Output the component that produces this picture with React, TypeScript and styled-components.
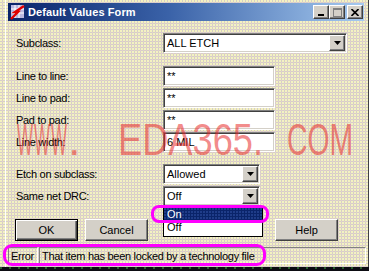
import React from "react";
import styled, { createGlobalStyle, css } from "styled-components";

const GlobalStyle = createGlobalStyle`
  html, body { margin: 0; padding: 0; }
  body {
    width: 369px;
    height: 271px;
    overflow: hidden;
    background: #0c0c12;
    font-family: "Liberation Sans", Arial, sans-serif;
  }
`;

const dotted = css`
  background-color: #d4d0c8;
  background-image:
    radial-gradient(circle at 1px 1px, #f6f2c2 0.7px, transparent 0.95px),
    radial-gradient(circle at 2.5px 2.5px, #e8cccc 0.5px, transparent 0.85px);
  background-size: 3px 3px, 3px 3px;
`;

const raised = css`
  box-sizing: border-box;
  background: #d4d0c8;
  border: 1px solid;
  border-color: #fff #404040 #404040 #fff;
  box-shadow: inset -1px -1px 0 #808080;
`;

const sunken = css`
  box-sizing: border-box;
  background: #fff;
  border: 1px solid;
  border-color: #808080 #fff #fff #808080;
  box-shadow: inset 1px 1px 0 #404040, inset -1px -1px 0 #d4d0c8;
`;

const Frame = styled.div`
  ${dotted};
  position: relative;
  height: 267px;
`;

const Window = styled.div`
  box-sizing: border-box;
  width: 364px;
  height: 267px;
  margin-left: 5px;
  padding: 3px 4px 0 1px;
  border-left: 1px solid #fff;
  border-right: 1px solid #404040;
  display: flex;
  flex-direction: column;
`;

const TitleBar = styled.div`
  height: 18px;
  margin-left: 1px;
  padding: 0 1px 0 2px;
  display: flex;
  align-items: center;
  background: linear-gradient(90deg, #0a246a 0%, #3a62a8 45%, #a6caf0 100%);
`;

const TitleText = styled.span`
  margin-left: 2px;
  color: #fff;
  font-weight: bold;
  font-size: 11px;
  letter-spacing: 0.1px;
`;

const CaptionButtons = styled.div`
  margin-left: auto;
  display: flex;
`;

const CaptionButton = styled.div<{ $gap?: number }>`
  ${raised};
  width: 16px;
  height: 14px;
  margin-left: ${(p) => p.$gap ?? 0}px;
  display: flex;
  align-items: center;
  justify-content: center;
`;

const Form = styled.div`
  padding-left: 9px;
  display: flex;
  flex-direction: column;
`;

const FieldRow = styled.div<{ $top: number }>`
  display: grid;
  grid-template-columns: 147px auto;
  align-items: center;
  height: 20px;
  margin-top: ${(p) => p.$top}px;
`;

const Label = styled.span`
  font-size: 11px;
  letter-spacing: -0.3px;
  color: #000;
`;

const TextBox = styled.div`
  ${sunken};
  width: 112px;
  height: 20px;
  padding: 0 3px;
  display: flex;
  align-items: center;
  font-size: 11px;
  color: #000;
`;

const Select = styled.div<{ $w: number }>`
  ${sunken};
  position: relative;
  width: ${(p) => p.$w}px;
  height: 20px;
  padding-left: 3px;
  display: flex;
  align-items: center;
  font-size: 11px;
  color: #000;
`;

const DropArrow = styled.div`
  ${raised};
  width: 16px;
  height: 16px;
  margin-left: auto;
  margin-right: 1px;
  display: flex;
  align-items: center;
  justify-content: center;
`;

const DropList = styled.div`
  position: absolute;
  top: calc(100% + 1px);
  left: -1px;
  width: 100px;
  box-sizing: border-box;
  background: #fff;
  border: 1px solid #000;
  padding: 1px 0 2px;
  z-index: 3;
`;

const ListItem = styled.div<{ $selected?: boolean }>`
  height: 13px;
  line-height: 13px;
  padding-left: 3px;
  font-size: 11px;
  color: ${(p) => (p.$selected ? "#fff" : "#000")};
  background: ${(p) => (p.$selected ? "#0a246a" : "transparent")};
  ${(p) =>
    p.$selected &&
    css`
      background-image: radial-gradient(circle at 1px 1px, #2a4a9a 0.6px, transparent 0.9px);
      background-size: 3px 3px;
    `}
`;

const OptionRing = styled.div`
  position: absolute;
  left: -13px;
  top: -2px;
  width: 118px;
  height: 18px;
  box-sizing: border-box;
  border: 3px solid #ff00ff;
  border-radius: 8px;
  pointer-events: none;
  z-index: 4;
`;

const ButtonRow = styled.div`
  margin: 13px 0 0 -1px;
  padding-right: 26px;
  display: flex;
  gap: 7px;
`;

const PushButton = styled.div<{ $default?: boolean; $push?: boolean }>`
  ${raised};
  width: 63px;
  height: 22px;
  margin-left: ${(p) => (p.$push ? "auto" : "0")};
  display: flex;
  align-items: center;
  justify-content: center;
  font-size: 11px;
  color: #000;
  ${(p) =>
    p.$default &&
    css`
      border: 1px solid #000;
      box-shadow: inset 1px 1px 0 #fff, inset -1px -1px 0 #404040, inset -2px -2px 0 #808080;
    `}
`;

const StatusBar = styled.div`
  position: relative;
  margin: 6px -2px 0 1px;
  height: 17px;
  display: flex;
  gap: 1px;
`;

const StatusPanel = styled.div<{ $w?: number }>`
  box-sizing: border-box;
  ${(p) => (p.$w ? `width: ${p.$w}px;` : "flex: 1;")}
  height: 17px;
  padding-left: 2px;
  border: 1px solid;
  border-color: #808080 #fff #fff #808080;
  display: flex;
  align-items: center;
  font-size: 11px;
  letter-spacing: -0.3px;
  color: #000;
  white-space: nowrap;
`;

const StatusRing = styled.div`
  position: absolute;
  left: -5px;
  top: -3px;
  width: 263px;
  height: 22px;
  box-sizing: border-box;
  border: 3px solid #ff00ff;
  border-radius: 9px;
  pointer-events: none;
`;

const Watermark = styled.svg`
  position: absolute;
  left: 15px;
  top: 117px;
  pointer-events: none;
  z-index: 5;
  overflow: visible;
`;

const WmText = styled.text`
  font-family: "Liberation Sans", Arial, sans-serif;
  font-size: 45px;
  fill: #e82828;
  fill-opacity: 0.55;
`;

const Taskbar = styled.div`
  height: 4px;
  background-color: #0c0c12;
  background-image: radial-gradient(circle at 1px 1px, #3a8a3a 0.6px, transparent 0.9px);
  background-size: 9px 4px;
`;

const Arrow = () => (
  <svg width="7" height="4" viewBox="0 0 7 4">
    <path d="M0 0H7L3.5 4Z" fill="#000" />
  </svg>
);

const AppIcon = () => (
  <svg width="16" height="15" viewBox="0 0 16 15">
    <rect x="1" y="0" width="13" height="13" fill="#b8b8e0" />
    <path d="M1 4H14M1 8H14M5 0V13M9 0V13" stroke="#fff" strokeWidth="1" />
    <path d="M1 14L8 7H5L14 1" stroke="#e00000" strokeWidth="2.4" fill="none" />
  </svg>
);

const MinGlyph = () => (
  <svg width="8" height="8" viewBox="0 0 8 8">
    <rect x="1" y="6" width="6" height="2" fill="#000" />
  </svg>
);

const MaxGlyph = () => (
  <svg width="9" height="9" viewBox="0 0 9 9">
    <rect x="0.5" y="0.5" width="8" height="8" fill="none" stroke="#808080" />
    <rect x="0" y="0" width="9" height="2" fill="#808080" />
  </svg>
);

const CloseGlyph = () => (
  <svg width="8" height="7" viewBox="0 0 8 7">
    <path d="M0.5 0L7.5 7M7.5 0L0.5 7" stroke="#000" strokeWidth="1.6" />
  </svg>
);

// x positions of the three narrow W letters of the watermark
const wX = [2, 19, 36];

const App = () => {
  return (
    <>
      <GlobalStyle />
      <Frame>
        <Window>
          <TitleBar>
            <AppIcon />
            <TitleText>Default Values Form</TitleText>
            <CaptionButtons>
              <CaptionButton>
                <MinGlyph />
              </CaptionButton>
              <CaptionButton>
                <MaxGlyph />
              </CaptionButton>
              <CaptionButton $gap={2}>
                <CloseGlyph />
              </CaptionButton>
            </CaptionButtons>
          </TitleBar>

          <Form>
            <FieldRow $top={12}>
              <Label>Subclass:</Label>
              <Select $w={184}>
                ALL ETCH
                <DropArrow>
                  <Arrow />
                </DropArrow>
              </Select>
            </FieldRow>

            <FieldRow $top={13}>
              <Label>Line to line:</Label>
              <TextBox>**</TextBox>
            </FieldRow>
            <FieldRow $top={2}>
              <Label>Line to pad:</Label>
              <TextBox>**</TextBox>
            </FieldRow>
            <FieldRow $top={2}>
              <Label>Pad to pad:</Label>
              <TextBox>**</TextBox>
            </FieldRow>
            <FieldRow $top={2}>
              <Label>Line width:</Label>
              <TextBox>6 MIL</TextBox>
            </FieldRow>

            <FieldRow $top={12}>
              <Label>Etch on subclass:</Label>
              <Select $w={97}>
                Allowed
                <DropArrow>
                  <Arrow />
                </DropArrow>
              </Select>
            </FieldRow>
            <FieldRow $top={2}>
              <Label>Same net DRC:</Label>
              <Select $w={97}>
                Off
                <DropArrow>
                  <Arrow />
                </DropArrow>
                <DropList>
                  <OptionRing />
                  <ListItem $selected>On</ListItem>
                  <ListItem>Off</ListItem>
                </DropList>
              </Select>
            </FieldRow>

            <ButtonRow>
              <PushButton $default>OK</PushButton>
              <PushButton>Cancel</PushButton>
              <PushButton $push>Help</PushButton>
            </ButtonRow>
          </Form>

          <StatusBar>
            <StatusRing />
            <StatusPanel $w={30}>Error</StatusPanel>
            <StatusPanel>That item has been locked by a technology file</StatusPanel>
          </StatusBar>
        </Window>

        <Watermark width="345" height="48" viewBox="0 0 345 48">
          {wX.map((x) => (
            <WmText key={x} x={x} y="38" textLength="16" lengthAdjust="spacingAndGlyphs">
              W
            </WmText>
          ))}
          <WmText x="53" y="38">.</WmText>
          <WmText x="103" y="38" textLength="145" lengthAdjust="spacingAndGlyphs">
            EDA365.
          </WmText>
          <WmText x="272" y="38" textLength="66" lengthAdjust="spacingAndGlyphs">
            COM
          </WmText>
        </Watermark>
      </Frame>
      <Taskbar />
    </>
  );
};

export default App;
